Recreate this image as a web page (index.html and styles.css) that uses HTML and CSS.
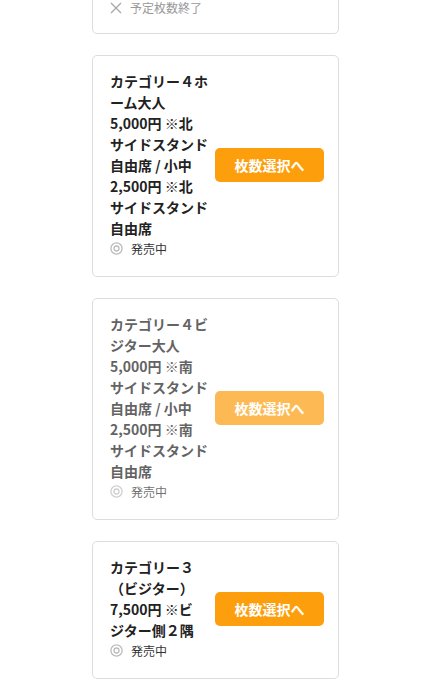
FILE: index.html
```html
<!DOCTYPE html>
<html>
<head>
    <meta charset="UTF-8">
    <title>券種選択</title>
    <link rel="stylesheet" href="styles.css">
</head>
<body>
<div class="list">
    <!-- 終了した券種 -->
    <div class="card end">
        <div class="info">
            <p class="name">カテゴリー２ホ<br>ーム大人</p>
            <p class="state state-end">
                <svg width="12" height="12" viewBox="0 0 12 12"><path d="M1 1 L11 11 M11 1 L1 11" stroke="#aaa" stroke-width="1.4" fill="none"/></svg>
                <span>予定枚数終了</span>
            </p>
        </div>
    </div>

    <div class="card">
        <div class="info">
            <p class="name">カテゴリー４ホ<br>ーム大人<br>5,000円 ※北<br>サイドスタンド<br>自由席 / 小中<br>2,500円 ※北<br>サイドスタンド<br>自由席</p>
            <p class="state">
                <svg width="13" height="13" viewBox="0 0 13 13"><circle cx="6.5" cy="6.5" r="5.6" stroke="#bbb" stroke-width="1.3" fill="none"/><circle cx="6.5" cy="6.5" r="2.5" stroke="#bbb" stroke-width="1.3" fill="none"/></svg>
                <span>発売中</span>
            </p>
        </div>
        <a class="btn" href="#">枚数選択へ</a>
    </div>

    <div class="card off">
        <div class="info">
            <p class="name">カテゴリー４ビ<br>ジター大人<br>5,000円 ※南<br>サイドスタンド<br>自由席 / 小中<br>2,500円 ※南<br>サイドスタンド<br>自由席</p>
            <p class="state">
                <svg width="13" height="13" viewBox="0 0 13 13"><circle cx="6.5" cy="6.5" r="5.6" stroke="#bbb" stroke-width="1.3" fill="none"/><circle cx="6.5" cy="6.5" r="2.5" stroke="#bbb" stroke-width="1.3" fill="none"/></svg>
                <span>発売中</span>
            </p>
        </div>
        <a class="btn" href="#">枚数選択へ</a>
    </div>

    <div class="card">
        <div class="info">
            <p class="name">カテゴリー３<br>（ビジター）<br>7,500円 ※ビ<br>ジター側２隅</p>
            <p class="state">
                <svg width="13" height="13" viewBox="0 0 13 13"><circle cx="6.5" cy="6.5" r="5.6" stroke="#bbb" stroke-width="1.3" fill="none"/><circle cx="6.5" cy="6.5" r="2.5" stroke="#bbb" stroke-width="1.3" fill="none"/></svg>
                <span>発売中</span>
            </p>
        </div>
        <a class="btn" href="#">枚数選択へ</a>
    </div>
</div>
</body>
</html>
```

FILE: styles.css
```css
*{
    margin: 0;
    padding: 0;
}
body{
    font-family: "Noto Sans CJK JP", "Noto Sans", sans-serif;
    color: #222;
    background: #fff;
    overflow: hidden;
}
a{
    text-decoration: none;
}
.list{
    width: 247px;
    margin: -60px 0 0 92px;
    display: flex;
    flex-direction: column;
    gap: 21px;
}
.card{
    display: flex;
    align-items: center;
    gap: 7px;
    padding: 15px 13px 18px 17px;
    border: 1px solid #ddd;
    border-radius: 5px;
}
.card.end{
    padding-bottom: 16px;
}
.info{
    width: 98px;
    flex: none;
}
.name{
    font-size: 14px;
    font-weight: 700;
    line-height: 21px;
    white-space: nowrap;
}
.state{
    display: flex;
    align-items: center;
    gap: 8px;
    height: 19px;
    font-size: 12px;
    color: #333;
}
.state svg{
    flex: none;
}
.state-end{
    color: #999;
}
.btn{
    width: 109px;
    height: 34px;
    line-height: 34px;
    text-align: center;
    background: #fd9e0c;
    color: #fff;
    font-size: 14px;
    font-weight: 700;
    border-radius: 5px;
    flex: none;
}
/* 受付停止中は薄く */
.card.off .info,
.card.off .btn{
    opacity: .7;
}
```
